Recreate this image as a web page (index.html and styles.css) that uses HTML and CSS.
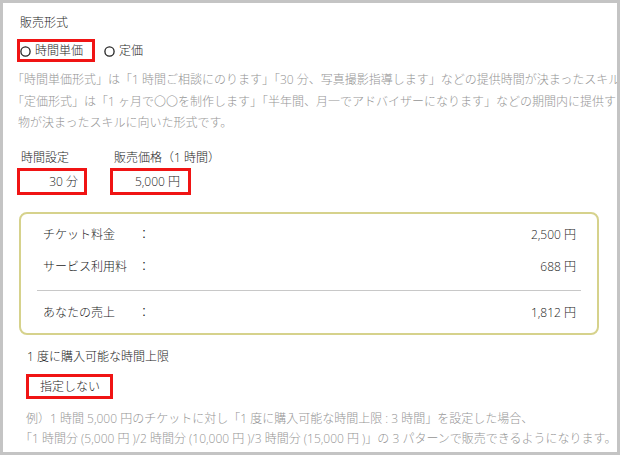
FILE: index.html
```html
<!DOCTYPE html>
<html lang="ja">
<head>
<meta charset="utf-8">
<title>販売形式</title>
<link rel="stylesheet" href="styles.css">
</head>
<body>
<div class="frame">
  <section class="format">
    <div class="title">販売形式</div>
    <div class="radios">
      <label class="radio marked"><svg class="circle" width="11" height="11" viewBox="0 0 11 11"><circle cx="5.5" cy="5.5" r="4.6" fill="none" stroke="#222" stroke-width="1.3"/></svg><span>時間単価</span></label>
      <label class="radio plain"><svg class="circle" width="11" height="11" viewBox="0 0 11 11"><circle cx="5.5" cy="5.5" r="4.6" fill="none" stroke="#222" stroke-width="1.3"/></svg><span>定価</span></label>
    </div>
    <p class="note"><span class="line"><span class="ob">「</span>時間単価形式」は「1 時間ご相談にのります」「30 分、写真撮影指導します」などの提供時間が決まったスキルに向いた形式です。</span><span class="line"><span class="ob">「</span>定価形式」は「1 ヶ月で〇〇を制作します」「半年間、月一でアドバイザーになります」などの期間内に提供する成果</span><span class="line">物が決まったスキルに向いた形式です。</span></p>
  </section>

  <section class="fields">
    <div class="field">
      <div class="flabel">時間設定</div>
      <div class="box time">30 分</div>
    </div>
    <div class="field">
      <div class="flabel">販売価格（1 時間）</div>
      <div class="box price">5,000 円</div>
    </div>
  </section>

  <div class="summary">
    <div class="row"><span class="name">チケット料金</span><span class="colon">：</span><span class="amount">2,500 円</span></div>
    <div class="row"><span class="name">サービス利用料</span><span class="colon">：</span><span class="amount">688 円</span></div>
    <div class="divider"></div>
    <div class="row last"><span class="name">あなたの売上</span><span class="colon">：</span><span class="amount">1,812 円</span></div>
  </div>

  <section class="limit">
    <div class="title">1 度に購入可能な時間上限</div>
    <div class="box none">指定しない</div>
    <p class="note small"><span class="line">例）1 時間 5,000 円のチケットに対し「1 度に購入可能な時間上限 : 3 時間」を設定した場合、</span><span class="line"><span class="ob">「</span>1 時間分 (5,000 円 )/2 時間分 (10,000 円 )/3 時間分 (15,000 円 )」の 3 パターンで販売できるようになります。</span></p>
  </section>
</div>
</body>
</html>
```

FILE: styles.css
```css
* { box-sizing: border-box; }

html, body {
  margin: 0;
  padding: 0;
  background: #fff;
}

body {
  font-family: "Open Sans", "Noto Sans CJK JP", sans-serif;
  font-size: 12px;
  font-weight: 300;
  color: #1c1c1c;
}

.frame {
  width: 620px;
  height: 455px;
  border: 3px solid #c4c4c4;
  background: #fff;
  overflow: hidden;
  padding: 10px 0 0 14px;
}

.title {
  line-height: 20px;
  padding-left: 3px;
}

.radios {
  display: flex;
  align-items: center;
  margin-top: 6px;
  height: 23px;
}

.radio {
  display: flex;
  align-items: center;
  gap: 4px;
  height: 23px;
  line-height: 17px;
}

.radio.marked {
  border: 3px solid #f01414;
  padding: 0 9px 0 0;
}

.radio.plain {
  margin-left: 9px;
}

.radio .circle {
  display: block;
  margin-top: 2px;
}

.note {
  margin: 7px 0 0 0;
  padding-left: 1px;
  color: #959595;
  line-height: 21.5px;
}

.note .line {
  display: block;
  white-space: nowrap;
}

.note .ob {
  margin-left: -6px;
}

.fields {
  display: flex;
  gap: 23px;
  margin-top: 14px;
}

.flabel {
  line-height: 20px;
  padding-left: 4px;
}

.box {
  border: 3px solid #f01414;
  background: #fff;
}

.box.time,
.box.price {
  height: 27px;
  line-height: 21px;
  text-align: right;
}

.box.time { width: 70px; padding-right: 6px; }
.box.price { width: 81px; padding-right: 8px; }

.summary {
  width: 580px;
  margin: 17px 0 0 2px;
  border: 2px solid #d6d28c;
  border-radius: 8px;
  padding: 5px 16px 4px 16px;
}

.row {
  display: flex;
  line-height: 32px;
  padding: 0 5px 0 6px;
}

.row.last {
  margin-top: 6px;
}

.row .name {
  width: 95px;
}

.row .colon {
  width: 12px;
}

.row .amount {
  margin-left: auto;
}

.divider {
  height: 1px;
  background: #c8c8c8;
  margin-top: 7px;
}

.limit {
  margin-top: 12px;
  padding-left: 9px;
}

.limit .title {
  padding-left: 1px;
}

.box.none {
  width: 87px;
  height: 25px;
  line-height: 19px;
  margin-top: 7px;
  text-align: center;
  padding-left: 1px;
}

.note.small {
  margin-top: 10px;
  line-height: 20px;
  padding-left: 0;
}
```
